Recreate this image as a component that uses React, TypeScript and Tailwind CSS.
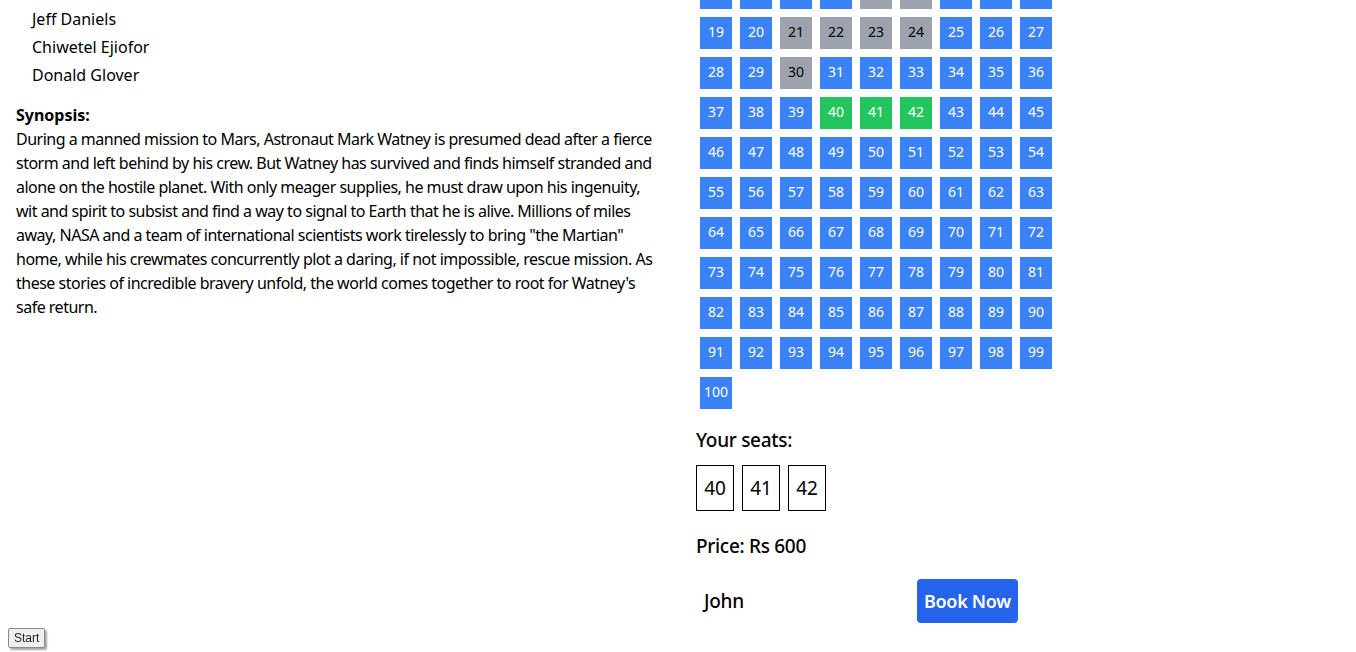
import { useState } from "react";

const BOOKED = [14, 15, 21, 22, 23, 24, 30];
const CAST = ["Jeff Daniels", "Chiwetel Ejiofor", "Donald Glover"];
const PRICE = 200;

function App() {
  const [selected, setSelected] = useState<number[]>([40, 41, 42]);

  const toggleSeat = (seat: number) => {
    if (BOOKED.includes(seat)) return;
    setSelected((prev) =>
      prev.includes(seat) ? prev.filter((s) => s !== seat) : [...prev, seat]
    );
  };

  const seats = Array.from({ length: 91 }, (_, i) => i + 10);

  return (
    <div
      className="grid grid-cols-[680px_1fr] min-h-[652px] bg-white text-black"
      style={{ fontFamily: '"Noto Sans", sans-serif' }}
    >
      <div className="px-4 pt-[5px]">
        <ul className="pl-4 text-[16px] leading-7">
          {CAST.map((name) => (
            <li key={name}>{name}</li>
          ))}
        </ul>
        <div className="mt-[14px] text-[16px] leading-6">
          <div className="font-bold">Synopsis:</div>
          <p className="w-[642px] tracking-[-0.5px]">
            During a manned mission to Mars, Astronaut Mark Watney is presumed
            dead after a fierce storm and left behind by his crew. But Watney
            has survived and finds himself stranded and alone on the hostile
            planet. With only meager supplies, he must draw upon his ingenuity,
            wit and spirit to subsist and find a way to signal to Earth that he
            is alive. Millions of miles away, NASA and a team of international
            scientists work tirelessly to bring "the Martian" home, while his
            crewmates concurrently plot a daring, if not impossible, rescue
            mission. As these stories of incredible bravery unfold, the world
            comes together to root for Watney's safe return.
          </p>
        </div>
      </div>

      <div className="pl-4">
        <div className="flex flex-wrap w-[360px] -mt-[27px]">
          {seats.map((seat) => {
            const booked = BOOKED.includes(seat);
            const isSelected = selected.includes(seat);
            let className =
              "m-1 w-8 h-8 pb-1 flex items-center justify-center text-[14px] cursor-pointer ";
            if (booked) className += "bg-[#9ca3af] text-black";
            else if (isSelected) className += "bg-[#22c55e] text-white";
            else className += "bg-[#3b82f6] text-white";
            return (
              <div key={seat} className={className} onClick={() => toggleSeat(seat)}>
                {seat}
              </div>
            );
          })}
        </div>

        <h2 className="mt-[13px] text-[19px] leading-7 font-medium tracking-[-0.3px]">
          Your seats:
        </h2>
        <div className="flex gap-2 mt-[11px]">
          {selected.map((seat) => (
            <div
              key={seat}
              className="border border-black w-[38px] h-[46px] flex items-center justify-center text-[19px]"
            >
              {seat}
            </div>
          ))}
        </div>

        <h2 className="mt-[21px] text-[19px] leading-7 font-medium tracking-[-0.3px]">
          Price: Rs {selected.length * PRICE}
        </h2>

        <div className="flex items-center mt-[19px]">
          <div className="w-[221px] px-2 text-[19px] font-medium tracking-[-0.3px]">John</div>
          <button className="h-[44px] px-[7px] rounded bg-[#2563eb] text-white text-[18px] font-semibold tracking-[-0.3px]">
            Book Now
          </button>
        </div>
      </div>

      <button
        className="fixed left-2 bottom-[4px] h-5 px-[5px] text-[12px] leading-none text-[#222] bg-[#f0f0f0] border border-[#8a8a8a] rounded-[2px] shadow-[2px_2px_2px_rgba(0,0,0,0.35)]"
        style={{ fontFamily: '"Liberation Sans", sans-serif' }}
      >
        Start
      </button>
    </div>
  );
}

export default App;
